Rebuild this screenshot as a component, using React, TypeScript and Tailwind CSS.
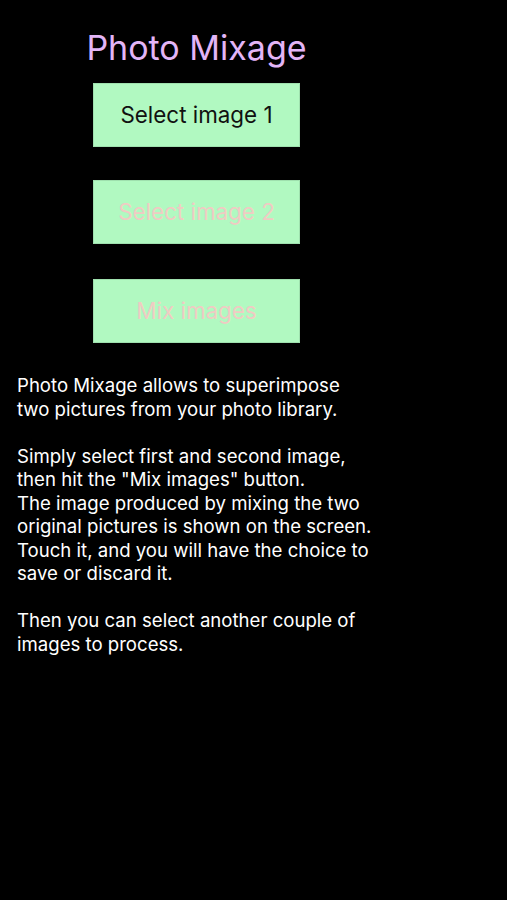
const buttons = [
  { label: 'Select image 1', enabled: true, gap: '' },
  { label: 'Select image 2', enabled: false, gap: 'mt-[33px]' },
  { label: 'Mix images', enabled: false, gap: 'mt-[35px]' },
];

const App = () => {
  return (
    <div className="min-h-[900px] w-[507px] bg-black font-['Inter',sans-serif]">
      <div className="flex w-[393px] flex-col items-center pt-[28px]">
        <h1 className="text-[34px] leading-[40px] font-normal text-[#e3b5f7]">Photo Mixage</h1>
        <div className="mt-[15px] flex flex-col">
          {buttons.map((b) => (
            <button
              key={b.label}
              className={
                b.enabled
                  ? 'flex h-[64px] w-[207px] items-center justify-center border border-[#9fe0ae] bg-[#b1f9c1] text-[22.4px] text-[#111]'
                  : `${b.gap} flex h-[64px] w-[207px] items-center justify-center border border-[#9fe0ae] bg-[#b1f9c1] text-[22.4px] text-[#f0cbc3]`
              }
            >
              {b.label}
            </button>
          ))}
        </div>
      </div>
      <div className="mt-[31px] px-[17px] text-[18.6px] leading-[23.5px] text-white">
        <p>
          Photo Mixage allows to superimpose
          <br />
          two pictures from your photo library.
        </p>
        <p className="mt-[23.5px]">
          Simply select first and second image,
          <br />
          then hit the "Mix images" button.
          <br />
          The image produced by mixing the two
          <br />
          original pictures is shown on the screen.
          <br />
          Touch it, and you will have the choice to
          <br />
          save or discard it.
        </p>
        <p className="mt-[23.5px]">
          Then you can select another couple of
          <br />
          images to process.
        </p>
      </div>
    </div>
  );
};

export default App;
